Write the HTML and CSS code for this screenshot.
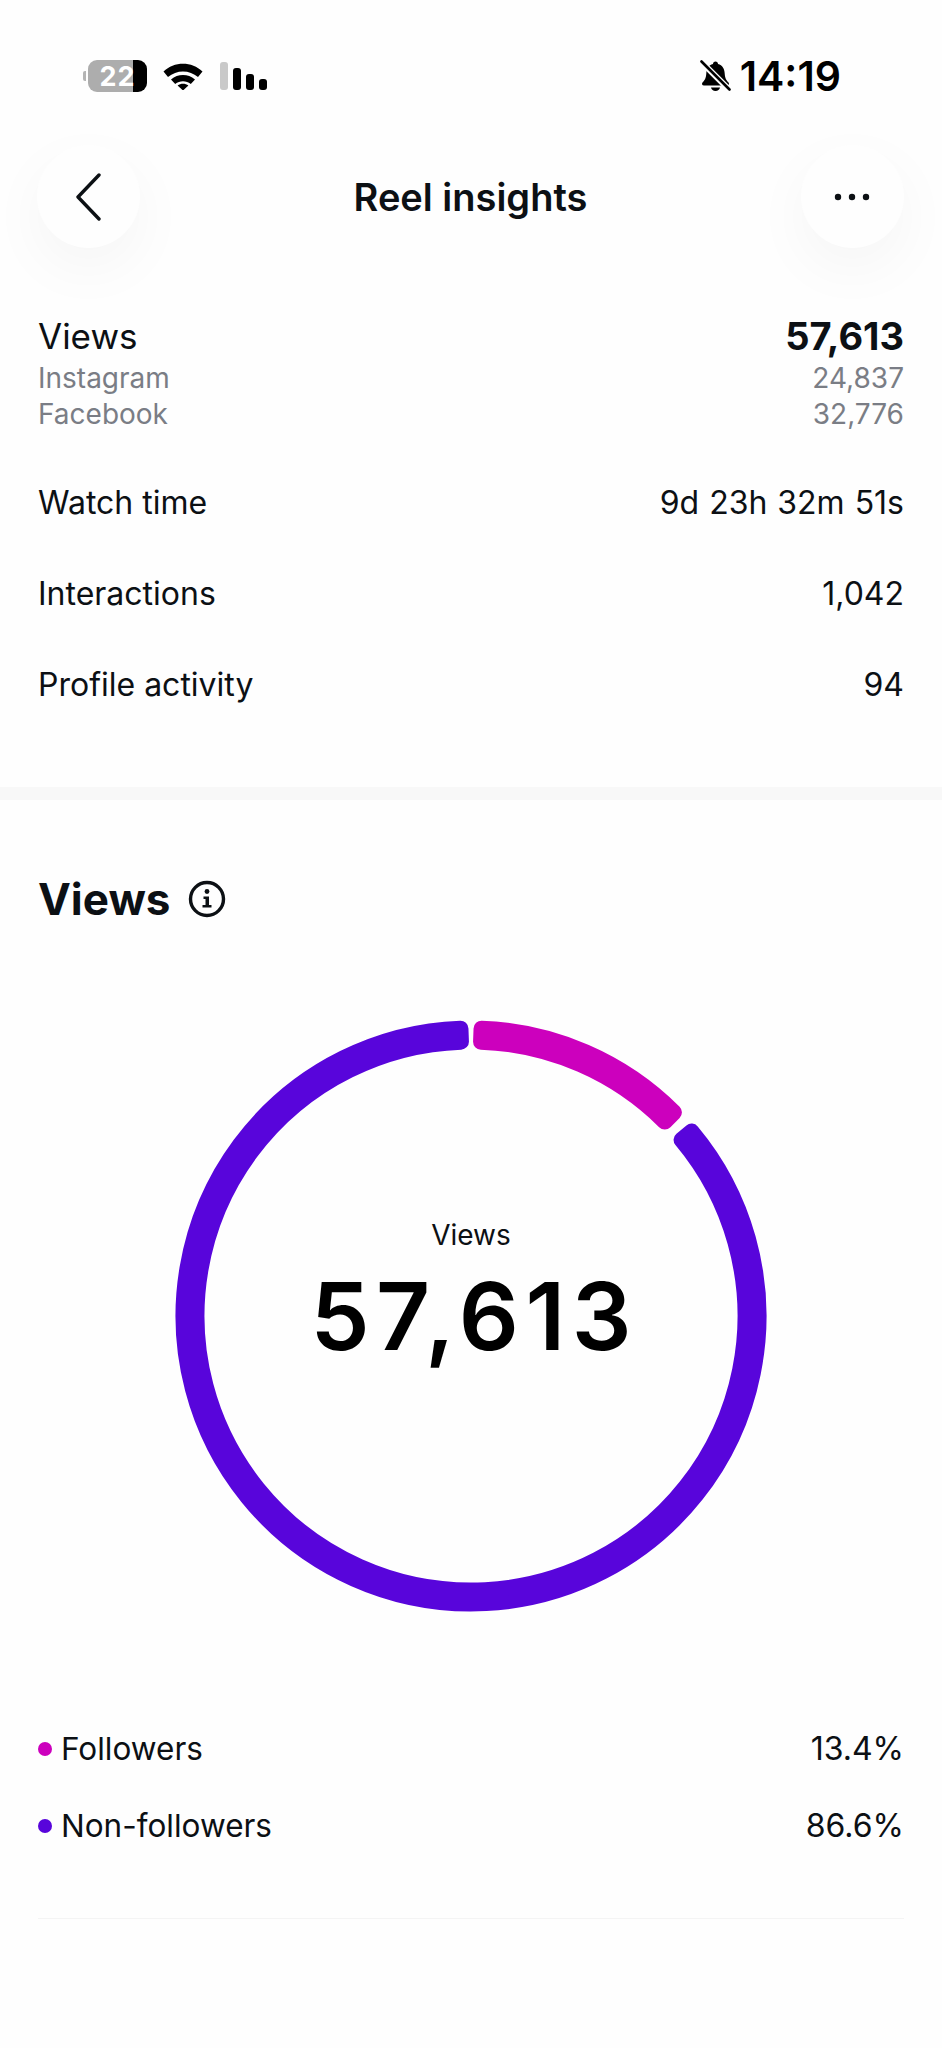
FILE: index.html
```html
<!DOCTYPE html>
<html lang="en">
<head>
  <meta charset="UTF-8">
  <meta name="viewport" content="width=device-width, initial-scale=1.0">
  <title>Reel insights</title>
  <link rel="stylesheet" href="styles.css">
</head>
<body>
  <div class="status-bar">
    <div class="status-left">
      <div class="battery">
        <span class="battery-nub"></span>
        <span class="battery-body"><span class="battery-text">22</span></span>
      </div>
      <svg class="wifi" width="40" height="28" viewBox="0 0 40 28">
        <path d="M0.5 9.5 C11 -1 29 -1 39.5 9.5 L35 15 C26.5 7.5 13.5 7.5 5 15 Z" fill="#000"/>
        <path d="M8 17.5 C15 11.6 25 11.6 32 17.5 L27.8 22 C23.2 18.4 16.8 18.4 12.2 22 Z" fill="#000"/>
        <path d="M14.6 23.5 C17.8 21 22.2 21 25.4 23.5 L20 28.5 Z" fill="#000"/>
      </svg>
      <div class="signal">
        <span class="bar bar-off"></span>
        <span class="bar bar-2"></span>
        <span class="bar bar-3"></span>
        <span class="bar bar-4"></span>
      </div>
    </div>
    <div class="status-right">
      <svg class="bell" width="31" height="32" viewBox="0 0 31 32">
        <path d="M15.5 1.5 C17 1.5 18 2.6 18 4 C22.5 5.2 24.5 9 24.7 13.5 C25 18.5 26.5 20.5 28.5 22.5 C29.5 23.7 29 25.5 27 25.5 L4 25.5 C2 25.5 1.5 23.7 2.5 22.5 C4.5 20.5 6 18.5 6.3 13.5 C6.5 9 8.5 5.2 13 4 C13 2.6 14 1.5 15.5 1.5 Z" fill="#000"/>
        <path d="M11 27.5 L20 27.5 C19.6 29.8 17.8 31 15.5 31 C13.2 31 11.4 29.8 11 27.5 Z" fill="#000"/>
        <path d="M1.5 2 L29.5 30" stroke="#fefefe" stroke-width="6"/>
        <path d="M1.5 1.5 L29.5 29.5" stroke="#000" stroke-width="2.6" stroke-linecap="round"/>
      </svg>
      <span class="clock">14:19</span>
    </div>
  </div>

  <div class="nav">
    <div class="round-btn">
      <svg width="30" height="48" viewBox="0 0 30 48">
        <path d="M25 2 L4 24 L25 46" fill="none" stroke="#0c1014" stroke-width="3.4" stroke-linecap="round" stroke-linejoin="round"/>
      </svg>
    </div>
    <div class="nav-title">Reel insights</div>
    <div class="round-btn">
      <svg width="36" height="8" viewBox="0 0 36 8">
        <circle cx="4" cy="4" r="3.2" fill="#0c1014"/>
        <circle cx="18" cy="4" r="3.2" fill="#0c1014"/>
        <circle cx="32" cy="4" r="3.2" fill="#0c1014"/>
      </svg>
    </div>
  </div>

  <div class="summary">
    <div class="views-group">
      <div class="row row-main"><span>Views</span><strong>57,613</strong></div>
      <div class="row row-sub"><span>Instagram</span><span>24,837</span></div>
      <div class="row row-sub"><span>Facebook</span><span>32,776</span></div>
    </div>
    <div class="row row-stat"><span>Watch time</span><span class="duration">9d 23h 32m 51s</span></div>
    <div class="row row-stat"><span>Interactions</span><span>1,042</span></div>
    <div class="row row-stat"><span>Profile activity</span><span>94</span></div>
  </div>

  <div class="band"></div>

  <div class="section">
    <div class="section-head">
      <h2>Views</h2>
      <svg width="38" height="38" viewBox="0 0 38 38">
        <circle cx="19" cy="19" r="16.5" fill="none" stroke="#0c1014" stroke-width="3.4"/>
        <circle cx="19" cy="11.5" r="2.4" fill="#0c1014"/>
        <path d="M15.5 16.5 H21 V25 H23.5 V27.5 H14.5 V25 H17.5 V19 H15.5 Z" fill="#0c1014"/>
      </svg>
    </div>

    <div class="ring-wrap">
      <svg class="ring" id="ring" width="592" height="592" viewBox="0 0 592 592"></svg>
      <div class="ring-center">
        <div class="ring-label">Views</div>
        <div class="ring-value">57,613</div>
      </div>
    </div>

    <div class="legend">
      <div class="row row-stat"><span class="legend-name"><i class="dot dot-followers"></i>Followers</span><span>13.4%</span></div>
      <div class="row row-stat"><span class="legend-name"><i class="dot dot-others"></i>Non-followers</span><span>86.6%</span></div>
    </div>
    <div class="rule"></div>
  </div>

  <script>
    // annular sector, drawn inset and stroked so the corners come out round
    const ring = document.getElementById('ring');
    const center = 296;
    const outer = 287.5;
    const inner = 274.5;

    function pt(r, deg) {
      const a = deg * Math.PI / 180;
      return `${(center + r * Math.sin(a)).toFixed(2)} ${(center - r * Math.cos(a)).toFixed(2)}`;
    }

    function sector(from, to, color) {
      const big = to - from > 180 ? 1 : 0;
      const d = `M${pt(outer, from)} A${outer} ${outer} 0 ${big} 1 ${pt(outer, to)} L${pt(inner, to)} A${inner} ${inner} 0 ${big} 0 ${pt(inner, from)} Z`;
      const path = document.createElementNS('http://www.w3.org/2000/svg', 'path');
      path.setAttribute('d', d);
      path.setAttribute('fill', color);
      path.setAttribute('stroke', color);
      path.setAttribute('stroke-width', '16');
      path.setAttribute('stroke-linejoin', 'round');
      ring.appendChild(path);
    }

    sector(2.1, 44.9, '#cc00bd');
    sector(50.1, 357.9, '#5805db');
  </script>
</body>
</html>
```

FILE: styles.css
```css
body {
  margin: 0;
  padding: 0;
  height: 2048px;
  overflow: hidden;
  font-family: Inter, "Noto Sans", sans-serif;
  background: #fefefe;
  color: #0c1014;
}
.status-bar {
  display: flex;
  justify-content: space-between;
  align-items: center;
  height: 32px;
  padding: 60px 101px 0 83px;
}
.status-left {
  display: flex;
  align-items: center;
}
.status-right {
  display: flex;
  align-items: center;
  gap: 9px;
}
.battery {
  display: flex;
  align-items: center;
  gap: 2px;
  margin-right: 16px;
}
.battery-nub {
  width: 3px;
  height: 10px;
  border-radius: 2px 0 0 2px;
  background: #b4b4b4;
}
.battery-body {
  width: 59px;
  height: 32px;
  border-radius: 9px;
  background: linear-gradient(to right, #adadad 76%, #000 76%);
  display: flex;
  align-items: center;
  justify-content: center;
}
.battery-text {
  color: #fff;
  font-weight: 700;
  font-size: 27px;
  letter-spacing: 1px;
}
.signal {
  display: flex;
  align-items: flex-end;
  gap: 5px;
  height: 28px;
  margin-left: 17px;
}
.bar {
  width: 8px;
  border-radius: 3px;
  background: #000;
}
.bar-off {
  height: 28px;
  background: #c9c9c9;
}
.bar-2 { height: 22px; }
.bar-3 { height: 16px; }
.bar-4 { height: 11px; }
.clock {
  font-size: 41px;
  font-weight: 600;
  color: #000;
}
.nav {
  display: flex;
  justify-content: space-between;
  align-items: center;
  padding: 53px 38px 0 37px;
}
.round-btn {
  width: 103px;
  height: 103px;
  border-radius: 50%;
  background: #fefefe;
  box-shadow: 0 20px 60px rgba(0, 0, 0, 0.04);
  display: flex;
  align-items: center;
  justify-content: center;
}
.nav-title {
  font-size: 38px;
  font-weight: 600;
}
.summary {
  padding: 63px 38px 0;
}
.row {
  display: flex;
  justify-content: space-between;
  align-items: center;
}
.row-main {
  font-size: 35px;
  height: 49px;
}
.row-main strong {
  font-size: 38px;
  font-weight: 700;
}
.row-sub {
  font-size: 28px;
  height: 36px;
  color: #7a7d85;
}
.row-stat {
  font-size: 32px;
  height: 91px;
}
.duration {
  word-spacing: 1px;
}
.views-group {
  margin-bottom: 25px;
}
.band {
  height: 13px;
  margin-top: 57px;
  background: #f8f8f8;
}
.section {
  padding: 0 38px;
}
.section-head {
  display: flex;
  align-items: center;
  gap: 18px;
  height: 46px;
  margin-top: 76px;
}
.section-head h2 {
  margin: 0;
  font-size: 44px;
  font-weight: 700;
}
.ring-wrap {
  display: grid;
  place-items: center;
  margin-top: 98px;
}
.ring,
.ring-center {
  grid-row: 1;
  grid-column: 1;
}
.ring-center {
  text-align: center;
  padding-bottom: 44px;
}
.ring-label {
  font-size: 28px;
  line-height: 34px;
  margin-bottom: 10px;
}
.ring-value {
  font-size: 94px;
  font-weight: 600;
  letter-spacing: 6.5px;
  margin-right: -6.5px;
  line-height: 108px;
  color: #000;
}
.legend {
  margin-top: 98px;
}
.legend .row-stat {
  height: 77px;
}
.legend-name {
  display: flex;
  align-items: center;
  gap: 9px;
  font-size: 31.5px;
}
.dot {
  width: 14px;
  height: 14px;
  border-radius: 50%;
}
.dot-followers { background: #cc00bd; }
.dot-others { background: #5805db; }
.rule {
  height: 1px;
  margin-top: 54px;
  background: #f4f4f4;
}
```
